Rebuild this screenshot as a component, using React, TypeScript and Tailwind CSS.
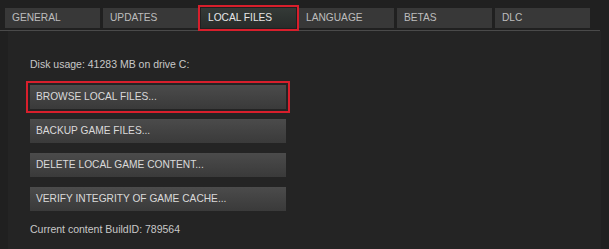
const tabs = ['GENERAL', 'UPDATES', 'LOCAL FILES', 'LANGUAGE', 'BETAS', 'DLC'];

const buttons = [
  'BROWSE LOCAL FILES...',
  'BACKUP GAME FILES...',
  'DELETE LOCAL GAME CONTENT...',
  'VERIFY INTEGRITY OF GAME CACHE...',
];

export default function App() {
  return (
    <div className="w-[609px] h-[249px] bg-[#202020] font-['Liberation_Sans',Arial,sans-serif] overflow-hidden">
      {/* tab strip */}
      <div className="flex gap-[3px] pl-[5px] pt-[8px]">
        {tabs.map(t => {
          const active = t === 'LOCAL FILES';
          return (
            <div
              key={t}
              className={
                active
                  ? 'w-[95px] h-[20px] pl-[7px] flex items-center text-[10.2px] text-[#e6e6e6] bg-gradient-to-b from-[#343a37] to-[#282c2a] outline-[2.5px] outline-solid outline-[#d81f2c] outline-offset-[1px]'
                  : 'w-[95px] h-[20px] pl-[7px] flex items-center text-[10.2px] text-[#bdbdbd] bg-[#383838]'
              }
            >
              {t}
            </div>
          );
        })}
      </div>
      <div className="mr-[9px] mt-[2px] h-[1px] bg-[#4a4a4a]" />

      {/* content */}
      <div className="mx-[8px] h-[218px] bg-[#242424] pl-[22px] pt-[27px]">
        <div className="text-[10.5px] text-[#c8c8c8] leading-[13px]">Disk usage: 41283 MB on drive C:</div>
        <div className="mt-[14px] flex flex-col gap-[10px]">
          {buttons.map((b, i) => (
            <div
              key={b}
              className={
                'w-[256px] h-[24px] pl-[6px] flex items-center text-[10.2px] text-[#dadada] bg-gradient-to-b from-[#4b4b4b] to-[#3a3a3a]' +
                (i === 0 ? ' outline-[2.5px] outline-solid outline-[#d81f2c] outline-offset-[2px]' : '')
              }
            >
              {b}
            </div>
          ))}
        </div>
        <div className="mt-[12px] text-[10.5px] text-[#c8c8c8] leading-[13px]">Current content BuildID: 789564</div>
      </div>
    </div>
  );
}
